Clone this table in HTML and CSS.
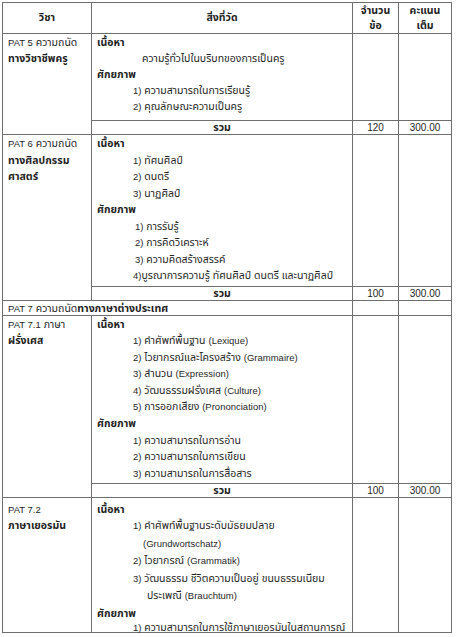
FILE: index.html
```html
<!DOCTYPE html>
<html lang="th">
<head>
<meta charset="utf-8">
<title>PAT</title>
<link rel="stylesheet" href="styles.css">
</head>
<body>
<div class="page">
<table class="tbl">
  <colgroup>
    <col class="c1"><col class="c2"><col class="c3"><col class="c4">
  </colgroup>
  <thead>
    <tr class="head">
      <th>วิชา</th>
      <th>สิ่งที่วัด</th>
      <th><div>จำนวน</div><div>ข้อ</div></th>
      <th><div>คะแนน</div><div>เต็ม</div></th>
    </tr>
  </thead>
  <tbody>
    <tr class="r5">
      <td rowspan="2" class="subj"><div class="ln"><span class="lat">PAT 5</span> ความถนัด</div><div class="ln b">ทางวิชาชีพครู</div></td>
      <td class="body">
        <div class="ln b">เนื้อหา</div>
        <div class="ln i2">ความรู้ทั่วไปในบริบทของการเป็นครู</div>
        <div class="ln b">ศักยภาพ</div>
        <div class="ln i1"><span class="lat">1)</span> ความสามารถในการเรียนรู้</div>
        <div class="ln i1"><span class="lat">2)</span> คุณลักษณะความเป็นครู</div>
      </td>
      <td></td><td></td>
    </tr>
    <tr class="sum">
      <td class="tc b"><div class="sl">รวม</div></td><td class="tc num"><div class="sl">120</div></td><td class="tc num"><div class="sl">300.00</div></td>
    </tr>
    <tr class="r6">
      <td rowspan="2" class="subj"><div class="ln"><span class="lat">PAT 6</span> ความถนัด</div><div class="ln b">ทางศิลปกรรม</div><div class="ln b">ศาสตร์</div></td>
      <td class="body">
        <div class="ln b">เนื้อหา</div>
        <div class="ln i1"><span class="lat">1)</span> ทัศนศิลป์</div>
        <div class="ln i1"><span class="lat">2)</span> ดนตรี</div>
        <div class="ln i1"><span class="lat">3)</span> นาฏศิลป์</div>
        <div class="ln b">ศักยภาพ</div>
        <div class="ln i1b"><span class="lat">1)</span> การรับรู้</div>
        <div class="ln i1b"><span class="lat">2)</span> การคิดวิเคราะห์</div>
        <div class="ln i1b"><span class="lat">3)</span> ความคิดสร้างสรรค์</div>
        <div class="ln i1"><span class="lat">4)</span>บูรณาการความรู้ ทัศนศิลป์ ดนตรี และนาฏศิลป์</div>
      </td>
      <td></td><td></td>
    </tr>
    <tr class="sum">
      <td class="tc b"><div class="sl">รวม</div></td><td class="tc num"><div class="sl">100</div></td><td class="tc num"><div class="sl">300.00</div></td>
    </tr>
    <tr class="r7">
      <td colspan="2" class="subj"><div class="ln"><span class="lat">PAT 7</span> ความถนัด<span class="b">ทางภาษาต่างประเทศ</span></div></td>
      <td></td><td></td>
    </tr>
    <tr class="r71">
      <td rowspan="2" class="subj"><div class="ln"><span class="lat">PAT 7.1</span> ภาษา</div><div class="ln b">ฝรั่งเศส</div></td>
      <td class="body">
        <div class="ln b">เนื้อหา</div>
        <div class="ln i1"><span class="lat">1)</span> คำศัพท์พื้นฐาน <span class="lat">(Lexique)</span></div>
        <div class="ln i1"><span class="lat">2)</span> ไวยากรณ์และโครงสร้าง <span class="lat">(Grammaire)</span></div>
        <div class="ln i1"><span class="lat">3)</span> สำนวน <span class="lat">(Expression)</span></div>
        <div class="ln i1"><span class="lat">4)</span> วัฒนธรรมฝรั่งเศส <span class="lat">(Culture)</span></div>
        <div class="ln i1"><span class="lat">5)</span> การออกเสียง <span class="lat">(Prononciation)</span></div>
        <div class="ln b">ศักยภาพ</div>
        <div class="ln i1"><span class="lat">1)</span> ความสามารถในการอ่าน</div>
        <div class="ln i1"><span class="lat">2)</span> ความสามารถในการเขียน</div>
        <div class="ln i1"><span class="lat">3)</span> ความสามารถในการสื่อสาร</div>
      </td>
      <td></td><td></td>
    </tr>
    <tr class="sum">
      <td class="tc b"><div class="sl">รวม</div></td><td class="tc num"><div class="sl">100</div></td><td class="tc num"><div class="sl">300.00</div></td>
    </tr>
    <tr class="r72">
      <td class="subj"><div class="ln l1"><span class="lat">PAT 7.2</span></div><div class="ln t b">ภาษาเยอรมัน</div></td>
      <td class="body">
        <div class="ln l1 b">เนื้อหา</div>
        <div class="ln t i1"><span class="lat">1)</span> คำศัพท์พื้นฐานระดับมัธยมปลาย</div>
        <div class="ln t i3"><span class="lat">(Grundwortschatz)</span></div>
        <div class="ln t i1"><span class="lat">2)</span> ไวยากรณ์ <span class="lat">(Grammatik)</span></div>
        <div class="ln t i1"><span class="lat">3)</span> วัฒนธรรม ชีวิตความเป็นอยู่ ขนบธรรมเนียม</div>
        <div class="ln t i4">ประเพณี <span class="lat">(Brauchtum)</span></div>
        <div class="ln t b">ศักยภาพ</div>
        <div class="ln last i1"><span class="lat">1)</span> ความสามารถในการใช้ภาษาเยอรมันในสถานการณ์</div>
      </td>
      <td></td><td></td>
    </tr>
  </tbody>
</table>
</div>
</body>
</html>
```

FILE: styles.css
```css
html, body {
  margin: 0;
  padding: 0;
  background: #ffffff;
}

.page {
  padding: 2px 0 0 2px;
  font-family: "Liberation Sans", "Noto Sans Thai", "Noto Sans", sans-serif;
  font-size: 10.5px;
  color: #1f1f1f;
  height: 635px;
  overflow: hidden;
}

.tbl {
  border-collapse: collapse;
  table-layout: fixed;
  width: 449px;
}

.c1 { width: 89px; }
.c2 { width: 261px; }
.c3 { width: 46px; }
.c4 { width: 53px; }

.tbl th,
.tbl td {
  border: 1px solid #6e6e6e;
  padding: 0 5px;
  vertical-align: top;
  text-align: left;
  font-weight: normal;
}

.head th {
  text-align: center;
  vertical-align: middle;
  font-weight: bold;
  padding: 0;
}

.head th div {
  height: 15px;
  line-height: 15px;
}

.head th:first-child,
.head th:nth-child(2) {
  height: 30px;
}

.lat { font-size: 9.5px; }

.ln {
  white-space: nowrap;
  overflow: visible;
}

.r5 .ln { height: 16px; line-height: 16px; }
.r5 .body { padding-bottom: 6px; }

.r6 .ln { height: 16.5px; line-height: 16.5px; }
.r6 .body { padding-bottom: 2px; }

.r7 .ln { height: 14px; line-height: 14px; }

.r71 .ln { height: 16.6px; line-height: 16.6px; }
.r71 .body { padding-bottom: 2px; }

.r72 td { padding-top: 3px; }
.r72 .ln { height: 17.5px; line-height: 17.5px; }
.r72 .ln.l1 { height: 16px; line-height: 16px; }
.r72 .ln.last { height: 10px; line-height: 10px; }

.tbl .b { font-weight: bold; }

.i1 { padding-left: 36px; }
.i1b { padding-left: 38px; }
.i2 { padding-left: 45px; }
.i3 { padding-left: 46px; }
.i4 { padding-left: 50px; }

.sum td { padding: 0; }

.sl {
  height: 13px;
  line-height: 13px;
}

.num { font-size: 10px; }

.tbl .tc { text-align: center; }
```
